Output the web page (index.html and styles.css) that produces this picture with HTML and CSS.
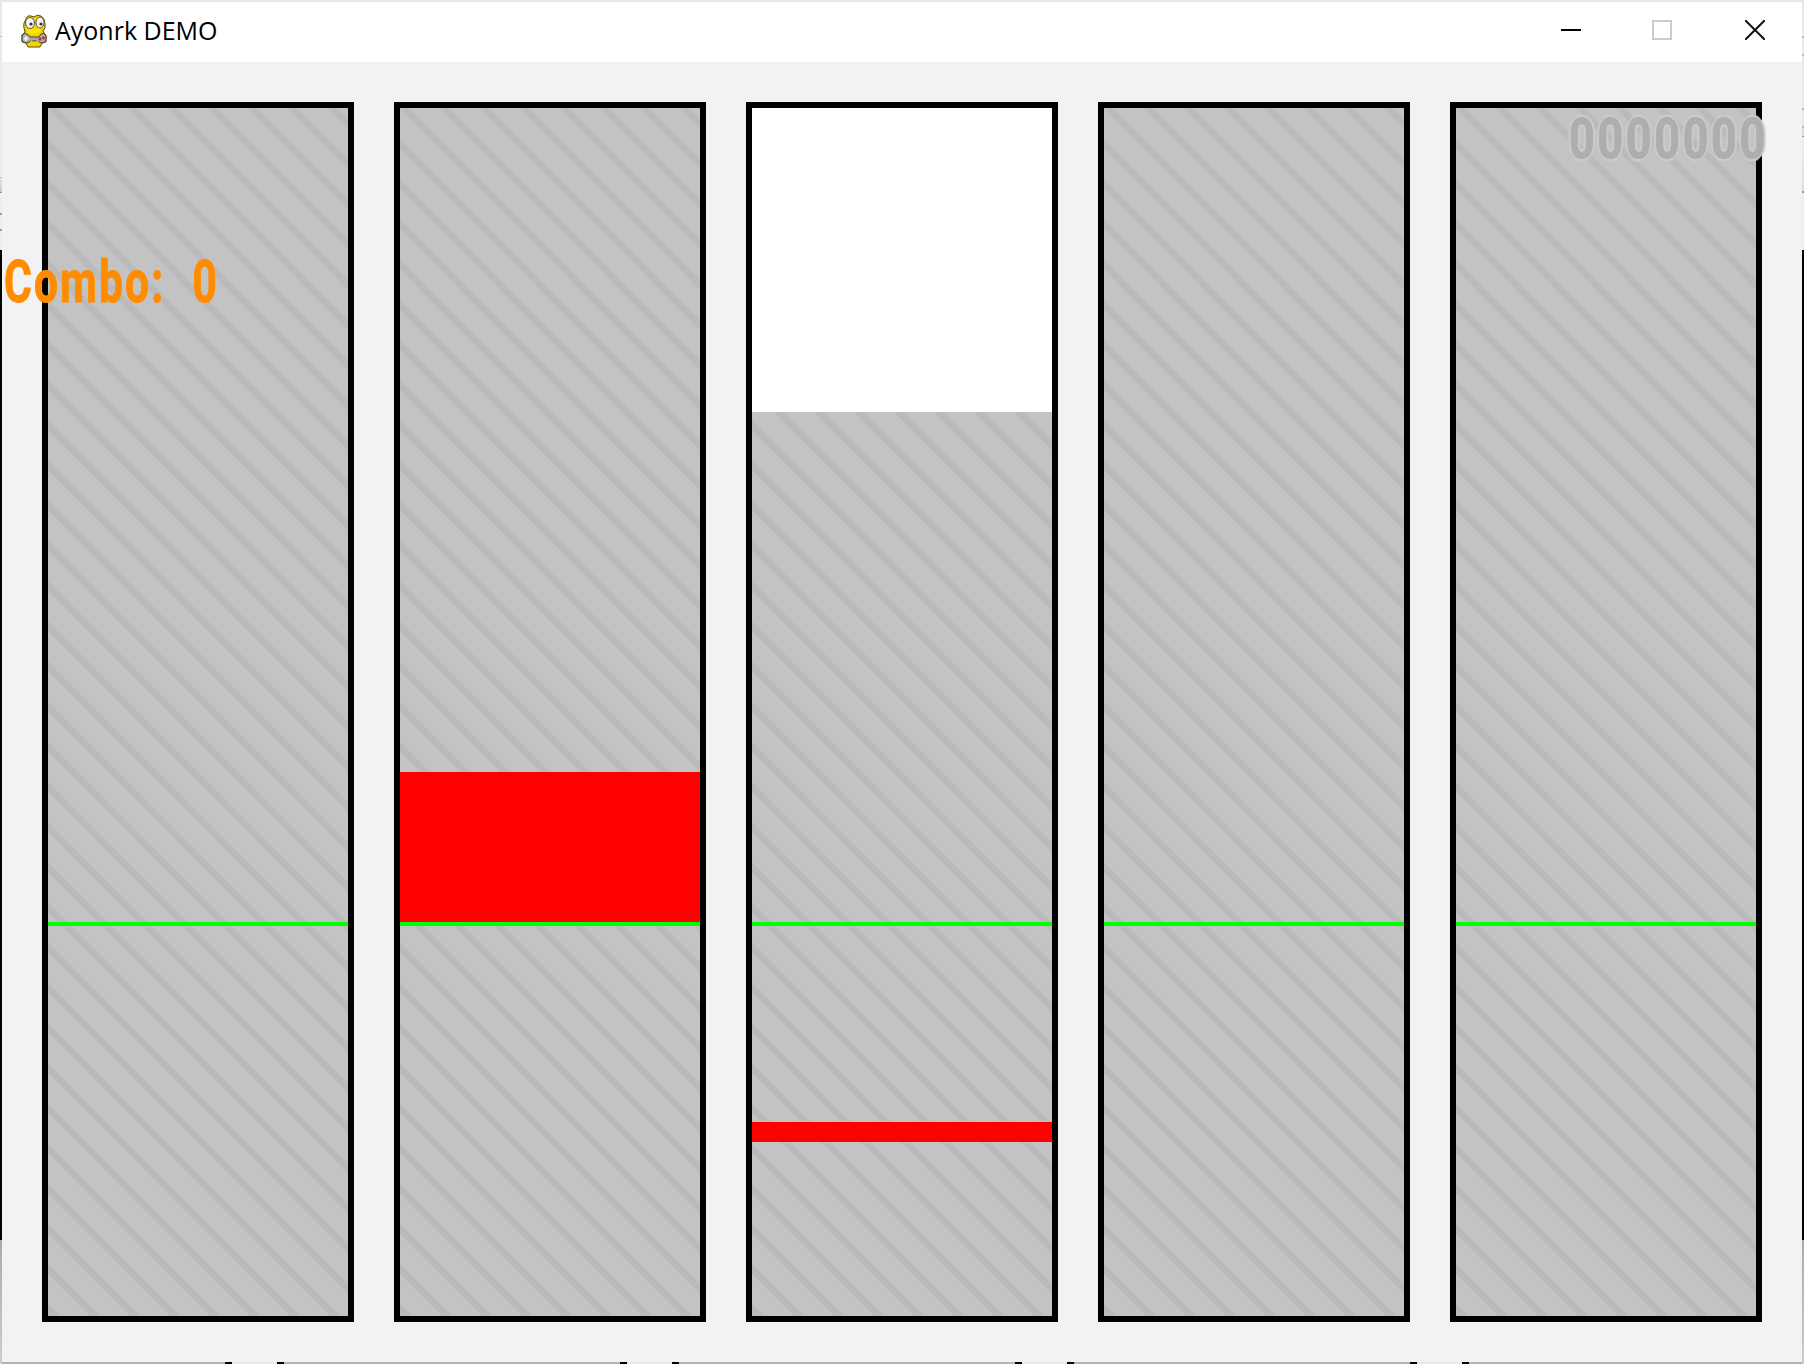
FILE: index.html
```html
<!DOCTYPE html>
<html lang="en">
<head>
    <meta charset="UTF-8">
    <meta name="viewport" content="width=device-width, initial-scale=1.0">
    <title>Ayonrk DEMO</title>
    <link rel="stylesheet" href="styles.css">
</head>
<body>
    <div class="window">
        <header class="titlebar">
            <svg class="app-icon" viewBox="0 0 28 34" width="28" height="34">
                <path d="M6 5 Q7 1 11 2 L14 3 Q17 0 21 2 Q25 4 25 10 Q26 14 23 17 L24 19 L26 21 L26 28 L22 29 L20 33 L8 33 L6 29 L2 28 L2 21 L5 18 Q3 12 4 9 Z" fill="#f4d400" stroke="#5a5000" stroke-width="1"/>
                <ellipse cx="10" cy="9" rx="4.5" ry="5.5" fill="#f4f4f0" stroke="#555" stroke-width="1"/>
                <ellipse cx="20" cy="8.5" rx="4" ry="5.5" fill="#f4f4f0" stroke="#555" stroke-width="1"/>
                <circle cx="11" cy="10" r="1.6" fill="#333"/>
                <circle cx="21" cy="10" r="1.6" fill="#333"/>
                <path d="M7 18 Q14 22 21 17 L19 14 Q14 17 9 15 Z" fill="#ffe600"/>
                <path d="M4 19 Q9 20 10 23 L19 23 Q20 19 24 19 Q27 21 26 27 Q22 31 18 27 L11 27 Q6 31 2 27 Q1 21 4 19 Z" fill="#a9a9a0" stroke="#444" stroke-width="1"/>
                <path d="M5 22 h2 v1.5 h1.5 v2 h-1.5 v1.5 h-2 v-1.5 h-1.5 v-2 h1.5 Z" fill="#eee"/>
                <circle cx="20" cy="25" r="1.4" fill="#c22"/>
                <circle cx="23.5" cy="24" r="1.4" fill="#c22"/>
                <path d="M11 26 Q14 30 18 26 L19 32 L9 32 Z" fill="#f4d400"/>
            </svg>
            <span class="app-title">Ayonrk DEMO</span>
            <div class="controls">
                <svg class="control" viewBox="0 0 20 20" width="20" height="20"><path d="M0 10h20" stroke="#000" stroke-width="2"/></svg>
                <svg class="control" viewBox="0 0 20 20" width="20" height="20"><path d="M1 1h18v18H1z" fill="none" stroke="#ccc" stroke-width="2"/></svg>
                <svg class="control control-close" viewBox="0 0 20 20" width="20" height="20"><path d="M0 0l20 20M20 0L0 20" stroke="#111" stroke-width="2"/></svg>
            </div>
        </header>
        <main class="game">
            <div class="lane"><div class="hit-line"></div></div>
            <div class="lane"><div class="note note-hold"></div><div class="hit-line"></div></div>
            <div class="lane">
                <div class="flash"></div>
                <div class="note note-short"></div>
                <div class="hit-line"></div>
            </div>
            <div class="lane"><div class="hit-line"></div></div>
            <div class="lane"><div class="hit-line"></div></div>
            <div class="combo">Combo: 0</div>
            <div class="score">0000000</div>
        </main>
    </div>
</body>
</html>
```
FILE: styles.css
```css
html, body {
    margin: 0;
    padding: 0;
    height: 100%;
}
body {
    box-sizing: border-box;
    width: 1804px;
    height: 1364px;
    padding: 2px;
    overflow: hidden;
    background-color: #e8e8e8;
    background-repeat: no-repeat, no-repeat, repeat-x;
    background-size: 2px 100%, 2px 100%, 395px 2px;
    background-position: left top, right top, left bottom;
    background-image:
        linear-gradient(to bottom, #e8e8e8 36px, #bbb 36px, #bbb 37px, #eaeaea 37px, #eaeaea 177px, #bbb 177px, #bbb 178px, #e4e4e4 178px, #c8c8c8 192px, #999 192px, #999 193px, #eee 193px, #eee 213px, #999 213px, #999 215px, #eee 215px, #eee 229px, #999 229px, #999 231px, #eee 231px, #eee 250px, #000 250px, #000 1240px, #aaa 1240px, #ccc 1364px),
        linear-gradient(to bottom, #e8e8e8 36px, #bbb 36px, #bbb 38px, #e8e8e8 38px, #e8e8e8 54px, #bbb 54px, #bbb 56px, #e8e8e8 56px, #e8e8e8 108px, #bbb 108px, #bbb 110px, #e8e8e8 110px, #e8e8e8 126px, #bbb 126px, #bbb 128px, #ddd 128px, #ddd 136px, #999 136px, #999 137px, #eee 137px, #ddd 191px, #999 191px, #999 193px, #eee 193px, #eee 250px, #000 250px, #000 1240px, #aaa 1240px, #ccc 1364px),
        linear-gradient(to right, #b4b4b4 225px, #000 225px, #000 232px, #e8e8e8 232px, #e8e8e8 277px, #000 277px, #000 284px, #b4b4b4 284px);
}
.window {
    display: flex;
    flex-direction: column;
    height: 100%;
}
.titlebar {
    display: flex;
    align-items: center;
    flex: 0 0 60px;
    box-sizing: border-box;
    padding-left: 18px;
    background-color: #fff;
}
.app-icon {
    margin-right: 7px;
    margin-top: -3px;
}
.app-title {
    font-family: "Open Sans", sans-serif;
    font-size: 25px;
    color: #000;
    margin-top: -4px;
}
.controls {
    display: flex;
    align-items: center;
    gap: 71px;
    margin-left: auto;
    margin-right: 37px;
    margin-top: -4px;
}
.control-close {
    margin-left: 2px;
}
.game {
    position: relative;
    flex: 1;
    display: flex;
    gap: 40px;
    padding: 40px;
    background-color: #f2f2f2;
}
.lane {
    position: relative;
    flex: 1;
    border: 6px solid #000;
    background-color: #c3c3c3;
    background-image: repeating-linear-gradient(45.12deg,
        #c3c3c3 0, #c3c3c3 1.2px, #bababa 2px, #bababa 8px, #c3c3c3 8.8px, #c3c3c3 28.34px);
}
.hit-line {
    position: absolute;
    left: 0;
    right: 0;
    top: 814px;
    height: 4px;
    background-color: #0f0;
}
.note {
    position: absolute;
    left: 0;
    right: 0;
    background-color: #f00;
}
.note-hold {
    top: 664px;
    height: 150px;
}
.note-short {
    top: 1014px;
    height: 20px;
}
.flash {
    height: 304px;
    background-color: #fff;
}
.combo {
    position: absolute;
    left: 2px;
    top: 185px;
    font-family: Roboto, sans-serif;
    font-weight: 700;
    font-size: 59px;
    line-height: 70px;
    letter-spacing: 3px;
    word-spacing: 20px;
    white-space: nowrap;
    color: #ff8c00;
    -webkit-text-stroke: 1px #ff8c00;
    transform: scaleX(0.72);
    transform-origin: left top;
}
.score {
    position: absolute;
    left: 1567px;
    top: 47px;
    font-family: Roboto, sans-serif;
    font-weight: 700;
    font-size: 56px;
    line-height: 60px;
    letter-spacing: 3.4px;
    white-space: nowrap;
    color: #aeaeae;
    -webkit-text-stroke: 1px #aeaeae;
    text-shadow: 3px 0 1px #cbcbcb, -3px 0 1px #cbcbcb, 0 3px 1px #cbcbcb, 0 -3px 1px #cbcbcb;
    transform: scaleX(0.8);
    transform-origin: left top;
}
```
